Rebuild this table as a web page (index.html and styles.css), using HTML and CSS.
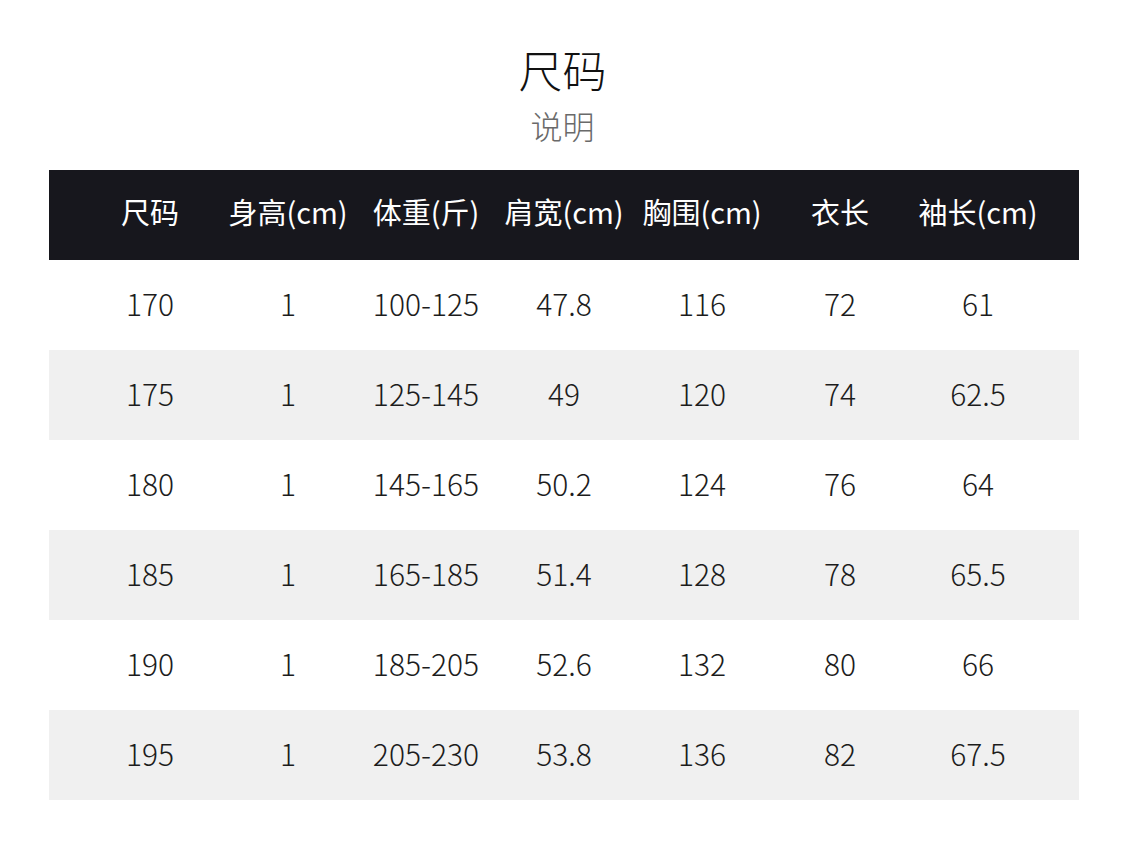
FILE: index.html
```html
<!DOCTYPE html>
<html lang="zh-CN">
<head>
<meta charset="utf-8">
<title>尺码说明</title>
<link rel="stylesheet" href="styles.css">
</head>
<body>
<div class="page">
  <header class="heading">
    <h1 class="title">尺码</h1>
    <p class="subtitle">说明</p>
  </header>
  <div class="table">
    <div class="row head">
      <div>尺码</div><div>身高(cm)</div><div>体重(斤)</div><div>肩宽(cm)</div><div>胸围(cm)</div><div>衣长</div><div>袖长(cm)</div>
    </div>
    <div class="row">
      <div>170</div><div>1</div><div>100-125</div><div>47.8</div><div>116</div><div>72</div><div>61</div>
    </div>
    <div class="row alt">
      <div>175</div><div>1</div><div>125-145</div><div>49</div><div>120</div><div>74</div><div>62.5</div>
    </div>
    <div class="row">
      <div>180</div><div>1</div><div>145-165</div><div>50.2</div><div>124</div><div>76</div><div>64</div>
    </div>
    <div class="row alt">
      <div>185</div><div>1</div><div>165-185</div><div>51.4</div><div>128</div><div>78</div><div>65.5</div>
    </div>
    <div class="row">
      <div>190</div><div>1</div><div>185-205</div><div>52.6</div><div>132</div><div>80</div><div>66</div>
    </div>
    <div class="row alt">
      <div>195</div><div>1</div><div>205-230</div><div>53.8</div><div>136</div><div>82</div><div>67.5</div>
    </div>
  </div>
</div>
</body>
</html>
```

FILE: styles.css
```css
html, body {
  margin: 0;
  padding: 0;
  background: #ffffff;
}

body {
  font-family: "Noto Sans CJK SC", "Noto Sans", sans-serif;
  color: #222222;
}

.page {
  width: 1125px;
  height: 846px;
  padding-top: 39px;
  box-sizing: border-box;
}

.heading {
  display: flex;
  flex-direction: column;
  align-items: center;
}

.title {
  margin: 0;
  font-size: 44px;
  font-weight: 300;
  line-height: 60px;
  color: #111111;
}

.subtitle {
  margin: 6px 0 0;
  font-size: 32px;
  font-weight: 300;
  line-height: 40px;
  color: #6a6a6a;
}

.table {
  margin: 25px 0 0 49px;
  width: 1030px;
}

.row {
  display: grid;
  grid-template-columns: repeat(7, 138px);
  padding: 0 32px 4px;
  height: 90px;
  box-sizing: border-box;
  align-items: center;
  text-align: center;
  font-size: 30px;
  font-weight: 300;
  white-space: nowrap;
  color: #1c1c1c;
}

.row.head {
  background: #17171d;
  color: #ffffff;
  font-size: 29px;
  font-weight: 400;
  padding-bottom: 8px;
}

.row.alt {
  background: #f0f0f0;
}
```
